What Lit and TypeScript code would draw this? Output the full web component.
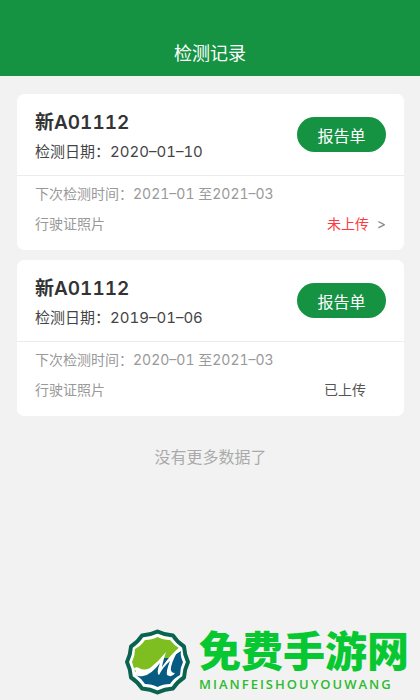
import { LitElement, html, css, nothing } from "lit";
import { customElement, property } from "lit/decorators.js";

interface InspectionRecord {
  plate: string;
  date: string;
  next: string;
  uploaded: boolean;
}

const RECORDS: InspectionRecord[] = [
  { plate: "新A01112", date: "2020–01–10", next: "2021–01 至2021–03", uploaded: false },
  { plate: "新A01112", date: "2019–01–06", next: "2020–01 至2021–03", uploaded: true },
];

@customElement("record-card")
export class RecordCard extends LitElement {
  @property({ attribute: false }) record!: InspectionRecord;

  static styles = css`
    :host {
      display: block;
      background: #fff;
      border-radius: 7px;
      font-variant-numeric: tabular-nums;
    }
    .top {
      display: flex;
      align-items: center;
      justify-content: space-between;
      padding: 13px 18px 9px;
      border-bottom: 1px solid #ececec;
    }
    .plate {
      margin: 0;
      font-size: 19px;
      line-height: 31px;
      font-weight: 600;
      color: #333;
    }
    .date {
      margin: 0;
      font-size: 15px;
      line-height: 28px;
      color: #444;
    }
    .report {
      width: 89px;
      height: 35px;
      margin-bottom: 4px;
      padding: 0;
      border: 0;
      border-radius: 18px;
      background: #159343;
      color: #fff;
      font: inherit;
      font-size: 16px;
      cursor: pointer;
    }
    .bottom {
      padding: 3px 18px 11px;
      font-size: 14px;
      line-height: 30px;
      color: #999;
    }
    .line {
      display: flex;
      justify-content: space-between;
    }
    .upload {
      display: flex;
      gap: 8px;
      color: #fb3b40;
      text-decoration: none;
    }
    .arrow {
      color: #888;
    }
    .done {
      padding-right: 20px;
      color: #555;
    }
  `;

  render() {
    const r = this.record;
    if (!r) return nothing;
    return html`
      <div class="top">
        <div>
          <h2 class="plate">${r.plate}</h2>
          <p class="date">检测日期：${r.date}</p>
        </div>
        <button class="report" type="button">报告单</button>
      </div>
      <div class="bottom">
        <div>下次检测时间：${r.next}</div>
        <div class="line">
          <span>行驶证照片</span>
          ${r.uploaded
            ? html`<span class="done">已上传</span>`
            : html`<a class="upload" href="#upload">未上传<span class="arrow">&gt;</span></a>`}
        </div>
      </div>
    `;
  }
}

@customElement("app-root")
export class AppRoot extends LitElement {
  static styles = css`
    :host {
      display: flex;
      flex-direction: column;
      min-height: 100vh;
      background: #f2f2f2;
      font-family: Inter, "Noto Sans CJK SC", sans-serif;
    }
    .header {
      padding: 39px 0 7px;
      background: #159343;
      color: #fff;
      text-align: center;
    }
    .title {
      margin: 0;
      font-size: 18px;
      line-height: 30px;
      font-weight: 400;
    }
    .list {
      display: flex;
      flex-direction: column;
      gap: 10px;
      padding: 18px 16px 0 17px;
    }
    .end {
      margin: 0;
      padding-top: 19px;
      font-size: 16px;
      line-height: 24px;
      color: #aaa;
      text-align: center;
    }
    .brand {
      display: flex;
      align-items: center;
      justify-content: flex-end;
      gap: 8px;
      margin-top: auto;
      padding: 0 11px 5px 0;
    }
    .logo {
      width: 67px;
      height: 66px;
    }
    .name {
      font-size: 42px;
      line-height: 44px;
      font-weight: 900;
      color: #08c832;
    }
    .latin {
      font-family: "Open Sans", sans-serif;
      font-size: 13px;
      line-height: 20px;
      font-weight: 600;
      letter-spacing: 2px;
      color: #2dbb2f;
    }
  `;

  render() {
    return html`
      <header class="header"><h1 class="title">检测记录</h1></header>
      <main class="list">
        ${RECORDS.map((r) => html`<record-card .record=${r}></record-card>`)}
        <p class="end">没有更多数据了</p>
      </main>
      <footer class="brand">
        <svg class="logo" viewBox="0 0 67 66" aria-hidden="true">
          <path
            d="M33.500 2.500Q40.700 6 49 6.500Q53.300 13.200 60 17.500Q60.500 25.800 64 33Q60.500 40.200 60 48.500Q53.300 52.800 49 59.500Q40.700 60 33.500 63.500Q26.300 60 18 59.500Q13.700 52.800 7 48.500Q6.500 40.200 3 33Q6.500 25.800 7 17.500Q13.700 13.200 18 6.500Q26.300 6 33.500 2.500Z"
            fill="#fff"
            stroke="#09634f"
            stroke-width="4"
            stroke-linejoin="round"
          />
          <path
            d="M33.500 8Q39 11 46 11Q50 16 55 19L46 29L30 40L12 46L8 33Q11 27 11 20Q17 17 21 11Q28 11 33.500 8Z"
            fill="#7fbe20"
          />
          <path
            d="M57 22Q56 27 59 33Q56 39 56 46Q50 49 46 55Q39 55 33.500 58Q28 55 21 55Q17 49 12 46Q23 47 30 39L40 29L46 29Z"
            fill="#075b83"
          />
          <path
            d="M9 40Q12 37 15 39Q20 42 26 39Q35 32 42 23Q39 32 38 38Q46 26 57 17Q49 29 47 38Q46 44 51 44Q48 49 43 46Q42 42 46 32Q39 38 35 46Q32 44 36 34Q27 46 19 47Q13 48 10 45L12 42Z"
            fill="#fff"
          />
        </svg>
        <div>
          <div class="name">免费手游网</div>
          <div class="latin">MIANFEISHOUYOUWANG</div>
        </div>
      </footer>
    `;
  }
}
